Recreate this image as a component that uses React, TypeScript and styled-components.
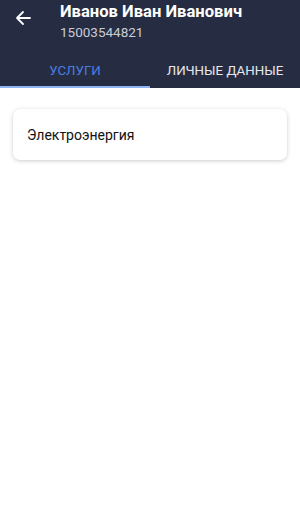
import React, { useState } from 'react'
import styled, { createGlobalStyle } from 'styled-components'

const GlobalStyle = createGlobalStyle`
  html, body {
    margin: 0;
    padding: 0;
    background: #fff;
    font-family: Roboto, 'Noto Sans', sans-serif;
  }
`

const tabs = ['Услуги', 'Личные данные']

const App: React.FC = () => {
  const [active, setActive] = useState(0)

  return (
    <>
      <GlobalStyle />
      <Screen>
        <Header>
          <TopRow>
            <BackButton aria-label="Назад">
              <svg width="16" height="16" viewBox="0 0 16 16">
                <path
                  d="M15 8H2M8 2L2 8l6 6"
                  fill="none"
                  stroke="#fff"
                  strokeWidth="1.8"
                  strokeLinecap="round"
                  strokeLinejoin="round"
                />
              </svg>
            </BackButton>
            <Titles>
              <Name>Иванов Иван Иванович</Name>
              <Account>15003544821</Account>
            </Titles>
          </TopRow>
          <TabBar>
            {tabs.map((t, i) => (
              <Tab key={t} active={i === active} onClick={() => setActive(i)}>
                {t}
              </Tab>
            ))}
          </TabBar>
        </Header>
        <Content>
          <Card>Электроэнергия</Card>
        </Content>
      </Screen>
    </>
  )
}

export default App

// Styles
const Screen = styled.div`
  width: 300px;
  min-height: 506px;
  background: #fff;
`

const Header = styled.header`
  background: #262d42;
  display: flex;
  flex-direction: column;
`

const TopRow = styled.div`
  display: flex;
  align-items: flex-start;
  height: 52px;
`

const BackButton = styled.button`
  width: 60px;
  height: 36px;
  padding: 0 0 0 15px;
  border: none;
  background: none;
  display: flex;
  align-items: center;
  cursor: pointer;
`

const Titles = styled.div`
  display: flex;
  flex-direction: column;
  padding-top: 1px;
`

const Name = styled.div`
  color: #fff;
  font-size: 16.6px;
  font-weight: 700;
  line-height: 22px;
`

const Account = styled.div`
  color: #c9ccd6;
  font-size: 13.5px;
  line-height: 19px;
`

const TabBar = styled.div`
  display: flex;
  height: 36px;
`

const Tab = styled.div<{ active: boolean }>`
  flex: 1;
  display: flex;
  align-items: center;
  justify-content: center;
  text-transform: uppercase;
  font-size: 13.3px;
  padding-top: 3px;
  box-sizing: border-box;
  color: ${p => (p.active ? '#4a7fe0' : '#e6e8ee')};
  border-bottom: 2px solid ${p => (p.active ? '#8fb3ee' : 'transparent')};
  cursor: pointer;
`

const Content = styled.main`
  padding: 21px 13px;
`

const Card = styled.div`
  height: 51px;
  border-radius: 7px;
  background: #fff;
  box-shadow: 0 1px 4px rgba(0, 0, 0, 0.2);
  display: flex;
  align-items: center;
  padding: 0 14px;
  font-size: 14px;
  color: #111;
`
